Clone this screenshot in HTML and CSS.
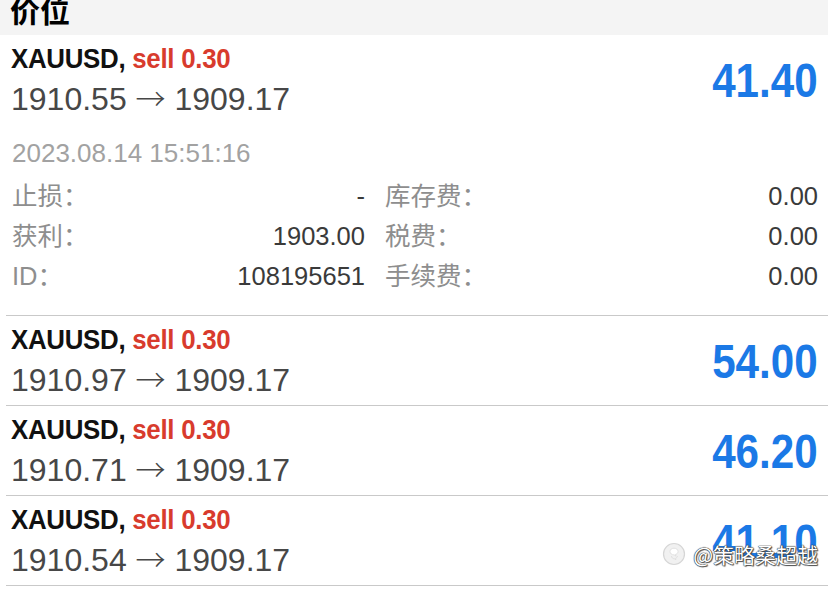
FILE: index.html
```html
<!DOCTYPE html>
<html lang="zh-CN">
<head>
<meta charset="utf-8">
<title>价位</title>
<link rel="stylesheet" href="styles.css">
</head>
<body>
<div class="header">价位</div>

<div class="pos">
  <div class="pos-head">
    <div class="pos-main">
      <div class="title"><span class="sym">XAUUSD,</span> <span class="side">sell 0.30</span></div>
      <div class="prices">1910.55 <span class="arrow">→</span> 1909.17</div>
    </div>
    <div class="profit"><span>41.40</span></div>
  </div>
  <div class="details">
    <div class="date">2023.08.14 15:51:16</div>
    <div class="grid">
      <div class="cell"><span class="lbl">止损：</span><span class="val">-</span></div>
      <div class="cell"><span class="lbl">库存费：</span><span class="val">0.00</span></div>
      <div class="cell"><span class="lbl">获利：</span><span class="val">1903.00</span></div>
      <div class="cell"><span class="lbl">税费：</span><span class="val">0.00</span></div>
      <div class="cell"><span class="lbl">ID：</span><span class="val">108195651</span></div>
      <div class="cell"><span class="lbl">手续费：</span><span class="val">0.00</span></div>
    </div>
  </div>
</div>

<div class="pos">
  <div class="pos-head">
    <div class="pos-main">
      <div class="title"><span class="sym">XAUUSD,</span> <span class="side">sell 0.30</span></div>
      <div class="prices">1910.97 <span class="arrow">→</span> 1909.17</div>
    </div>
    <div class="profit"><span>54.00</span></div>
  </div>
</div>

<div class="pos">
  <div class="pos-head">
    <div class="pos-main">
      <div class="title"><span class="sym">XAUUSD,</span> <span class="side">sell 0.30</span></div>
      <div class="prices">1910.71 <span class="arrow">→</span> 1909.17</div>
    </div>
    <div class="profit"><span>46.20</span></div>
  </div>
</div>

<div class="pos">
  <div class="pos-head">
    <div class="pos-main">
      <div class="title"><span class="sym">XAUUSD,</span> <span class="side">sell 0.30</span></div>
      <div class="prices">1910.54 <span class="arrow">→</span> 1909.17</div>
    </div>
    <div class="profit"><span>41.10</span></div>
  </div>
</div>

<div class="watermark">
  <svg class="wm-icon" width="24" height="24" viewBox="0 0 24 24" aria-hidden="true">
    <circle cx="12" cy="12" r="10.5" fill="#f1f1f1" stroke="#d6d6d6" stroke-width="1.2"/>
    <path d="M8 9.5c0-2 1.8-3.3 4-3.3s4 1.3 4 3.3c0 1.6-1.2 2.6-2.6 3l.6 1.6-1.8-1.2c-2.4 0-4.2-1.4-4.2-3.4z" fill="#fff" stroke="#dadada" stroke-width="0.8"/>
    <path d="M9.5 14c0 1.6 1.2 2.8 3 2.8l1.4.9-.4-1.2c1.1-.4 1.9-1.3 1.9-2.5" fill="none" stroke="#dadada" stroke-width="0.8"/>
  </svg>
  <span class="wm-text">@策略桑超越</span>
</div>
</body>
</html>
```

FILE: styles.css
```css
html, body {
  margin: 0;
  padding: 0;
  background: #ffffff;
}

body {
  position: relative;
  width: 828px;
  height: 595px;
  overflow: hidden;
  font-family: "Liberation Sans", "Noto Sans CJK SC", sans-serif;
}

.header {
  height: 35px;
  background: #f4f4f4;
  padding-left: 10px;
  font-family: "Noto Sans CJK SC", sans-serif;
  font-weight: 700;
  font-size: 30px;
  line-height: 18px;
  color: #000;
  overflow: hidden;
}

.pos {
  margin-left: 6px;
  border-bottom: 1px solid #c9c9c9;
}

.pos-head {
  display: flex;
  align-items: center;
  justify-content: space-between;
  padding: 9px 10px 0 5px;
  height: 80px;
}

.pos-main {
  display: flex;
  flex-direction: column;
  align-self: flex-start;
}

.title {
  font-size: 27.5px;
  line-height: 30px;
  font-weight: 700;
  white-space: nowrap;
  letter-spacing: -0.3px;
  transform: scaleX(0.94);
  transform-origin: left center;
}

.sym {
  color: #111;
}

.side {
  color: #d83b2d;
}

.prices {
  font-size: 32px;
  line-height: 50px;
  color: #474747;
  white-space: nowrap;
}

.arrow {
  font-family: "Noto Sans CJK SC", sans-serif;
  font-weight: 300;
  font-size: 30px;
  line-height: 1;
}

.profit {
  margin-top: -9px;
  font-size: 49px;
  font-weight: 700;
  color: #1b79e6;
  line-height: 60px;
}

.profit span {
  display: inline-block;
  transform: scaleX(0.86);
  transform-origin: right center;
}

.details {
  padding: 9px 10px 19px 6px;
}

.date {
  font-size: 26px;
  line-height: 40px;
  padding-bottom: 3px;
  color: #a2a2a2;
}

.grid {
  display: grid;
  grid-template-columns: 353px 1fr;
  column-gap: 20px;
}

.cell {
  display: flex;
  justify-content: space-between;
  font-size: 25.5px;
  line-height: 40px;
  white-space: nowrap;
}

.lbl {
  color: #8e8e8e;
}

.val {
  color: #3a3a3a;
}

.watermark {
  position: absolute;
  top: 540px;
  right: 10px;
  display: flex;
  align-items: center;
  gap: 7px;
}

.wm-text {
  font-family: "Noto Sans CJK SC", sans-serif;
  font-size: 21px;
  line-height: 28px;
  color: #ffffff;
  text-shadow: 0 0 1px #333, 0 0 1px #333, 0 0 1px #333, 1px 1px 1px #555;
}
```
